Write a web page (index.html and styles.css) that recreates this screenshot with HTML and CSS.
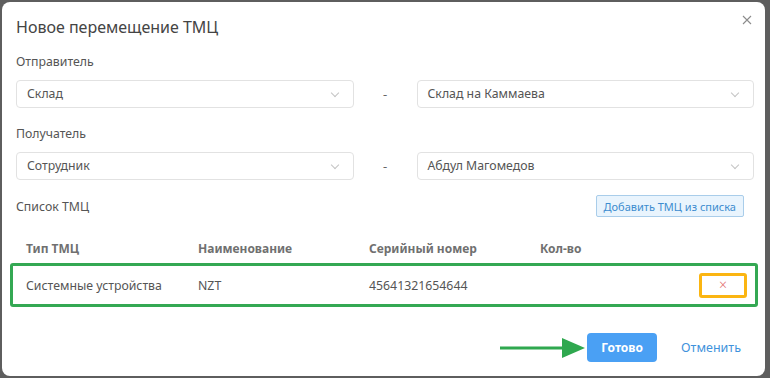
FILE: index.html
```html
<!DOCTYPE html>
<html lang="ru">
<head>
    <meta charset="UTF-8">
    <meta name="viewport" content="width=device-width, initial-scale=1.0">
    <title>Новое перемещение ТМЦ</title>
    <link rel="stylesheet" href="styles.css">
</head>
<body>
    <div class="dialog">
        <div class="dialog-head">
            <h1>Новое перемещение ТМЦ</h1>
            <button class="close" aria-label="Закрыть">
                <svg width="10" height="10" viewBox="0 0 10 10"><path d="M1 1L9 9M9 1L1 9" stroke="#8c8c8c" stroke-width="1.1" fill="none"/></svg>
            </button>
        </div>

        <div class="dialog-body">
            <label class="field-label">Отправитель</label>
            <div class="pair">
                <div class="select">Склад<span class="chevron"></span></div>
                <span class="dash">-</span>
                <div class="select">Склад на Каммаева<span class="chevron"></span></div>
            </div>

            <label class="field-label second">Получатель</label>
            <div class="pair">
                <div class="select">Сотрудник<span class="chevron"></span></div>
                <span class="dash">-</span>
                <div class="select">Абдул Магомедов<span class="chevron"></span></div>
            </div>

            <div class="list-head">
                <span class="list-title">Список ТМЦ</span>
                <button class="add-btn">Добавить ТМЦ из списка</button>
            </div>

            <div class="table">
                <div class="thead">
                    <span>Тип ТМЦ</span>
                    <span>Наименование</span>
                    <span>Серийный номер</span>
                    <span>Кол-во</span>
                    <span></span>
                </div>
                <div class="trow">
                    <span>Системные устройства</span>
                    <span>NZT</span>
                    <span>45641321654644</span>
                    <span></span>
                    <span class="cell-del"><button class="del-btn">&#215;</button></span>
                </div>
            </div>
        </div>

        <div class="dialog-foot">
            <svg class="arrow" width="86" height="22" viewBox="0 0 86 22">
                <path d="M0 11H66" stroke="#2fa84f" stroke-width="3"/>
                <path d="M62 1L85 11L62 21Z" fill="#2fa84f"/>
            </svg>
            <button class="primary">Готово</button>
            <button class="link">Отменить</button>
        </div>
    </div>
</body>
</html>
```

FILE: styles.css
```css
body {
    margin: 0;
    padding: 2px 5px 2px 2px;
    background-color: #5e5e5e;
    font-family: "Noto Sans", "Open Sans", sans-serif;
    color: #555;
}
button {
    font-family: inherit;
    cursor: pointer;
}
.dialog {
    background-color: #fff;
    border-radius: 8px;
    height: 374px;
    box-sizing: border-box;
    display: flex;
    flex-direction: column;
}
.dialog-head {
    display: flex;
    justify-content: space-between;
    align-items: flex-start;
    padding: 13px 11px 0 14px;
}
h1 {
    margin: 0;
    font-size: 16px;
    font-weight: 400;
    color: #444;
    line-height: 24px;
}
.close {
    background: none;
    border: none;
    padding: 0;
    margin: 0 2px 0 0;
    width: 10px;
    height: 10px;
    line-height: 0;
}
.dialog-body {
    padding: 0 11px 0 14px;
}
.field-label {
    display: block;
    font-size: 12.3px;
    line-height: 18px;
    color: #555;
    margin-top: 14px;
    margin-bottom: 9px;
}
.field-label.second {
    margin-top: 17px;
}
.pair {
    display: grid;
    grid-template-columns: 1fr 63px 1fr;
    align-items: center;
}
.select {
    position: relative;
    height: 28px;
    box-sizing: border-box;
    border: 1px solid #e2e2e2;
    border-radius: 4px;
    padding: 0 30px 0 10px;
    font-size: 12.3px;
    line-height: 26px;
    color: #555;
}
.chevron {
    position: absolute;
    right: 15px;
    top: 9px;
    width: 5px;
    height: 5px;
    border-right: 1px solid #c4c4c4;
    border-bottom: 1px solid #c4c4c4;
    transform: rotate(45deg);
}
.dash {
    text-align: center;
    font-size: 13px;
    color: #666;
}
.list-head {
    display: flex;
    justify-content: space-between;
    align-items: center;
    margin-top: 15px;
    padding-right: 10px;
}
.list-title {
    font-size: 12.3px;
    color: #555;
}
.add-btn {
    background-color: #e9f4fd;
    border: 1px solid #a9cdea;
    border-radius: 2px;
    color: #3d8ccf;
    font-size: 11px;
    height: 22px;
    padding: 0 7px;
}
.table {
    margin: 22px -4px 0 -6px;
}
.thead, .trow {
    display: grid;
    grid-template-columns: 172px 171px 171px 1fr 60px;
    align-items: center;
}
.thead {
    padding: 0 0 0 16px;
    font-size: 12px;
    font-weight: 700;
    color: #707070;
    height: 18px;
}
.trow {
    margin-top: 6px;
    height: 44px;
    box-sizing: border-box;
    border: 3px solid #34a853;
    border-radius: 3px;
    padding-left: 13px;
    font-size: 12.3px;
    color: #555;
}
.cell-del {
    display: flex;
    justify-content: flex-end;
    padding-right: 8px;
}
.del-btn {
    width: 48px;
    height: 25px;
    border: 3px solid #fbb511;
    border-radius: 3px;
    background: #fff;
    color: #e26a6a;
    font-size: 14px;
    font-weight: 300;
    line-height: 1;
    padding: 0;
}
.dialog-foot {
    margin-top: auto;
    display: flex;
    justify-content: flex-end;
    align-items: center;
    padding: 0 18px 14px 0;
}
.arrow {
    margin-right: 1px;
}
.primary {
    background-color: #4aa0f4;
    border: none;
    border-radius: 4px;
    color: #fff;
    font-weight: 700;
    font-size: 12px;
    width: 70px;
    height: 29px;
}
.link {
    background: none;
    border: none;
    color: #3f92dc;
    font-size: 12.5px;
    margin-left: 18px;
    padding: 0 6px;
}
```
